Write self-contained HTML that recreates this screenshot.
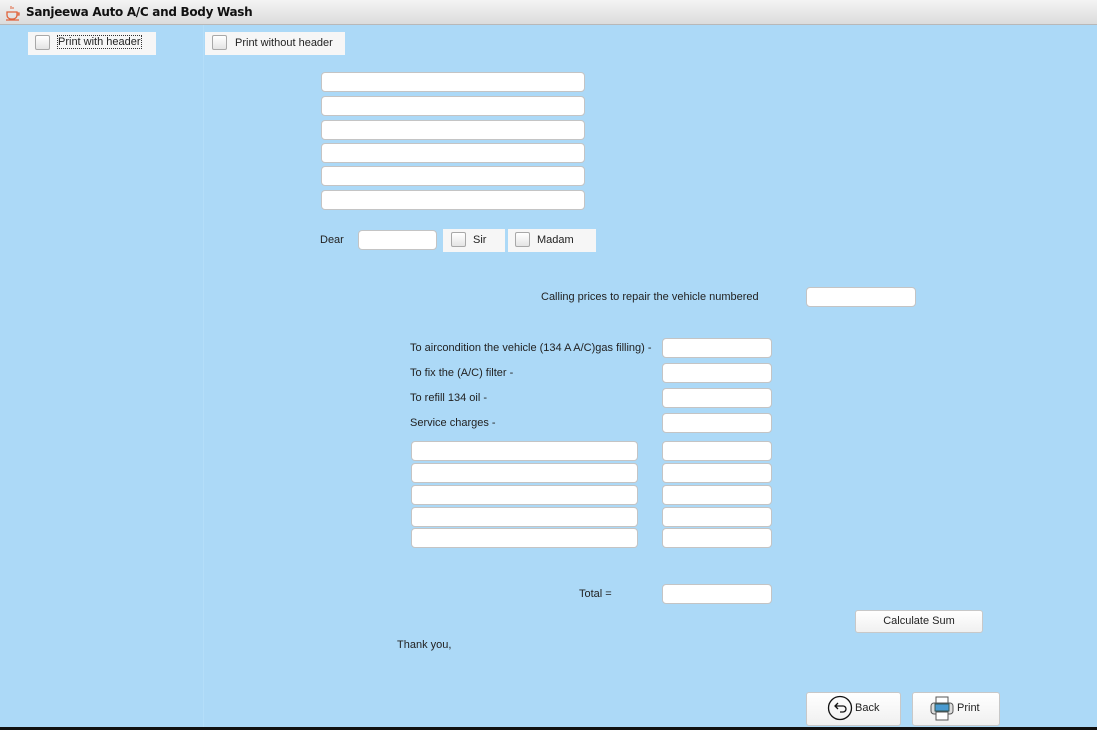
<!DOCTYPE html>
<html><head><style>
body{margin:0;width:1097px;height:730px;overflow:hidden;background:#acd9f7;font-family:"Liberation Sans",sans-serif;font-size:11px;color:#222;position:relative}
.a{position:absolute;white-space:nowrap}
.tb{left:0;top:0;width:1097px;height:25px;background:linear-gradient(#f4f4f4,#dcdcdc);border-bottom:1px solid #b8b8b8;box-sizing:border-box}
.tf{position:absolute;background:#fff;border:1px solid #c4c4c4;border-radius:4px;box-sizing:border-box;height:20px}
.cbp{position:absolute;background:#f6f6f6;box-sizing:border-box}
.cb{position:absolute;width:15px;height:15px;border:1px solid #a8a8a8;border-radius:2px;background:linear-gradient(#fff,#e4e4e4);box-sizing:border-box}
.btn{position:absolute;background:linear-gradient(#fff,#f0f0f0);border:1px solid #c8c8c8;border-radius:3px;box-sizing:border-box;text-align:center}
</style></head><body>
<div class="a tb"></div>
<svg class="a" style="left:4px;top:4px" width="18" height="18" viewBox="0 0 18 18"><path d="M3 8h10v3a4 4 0 0 1-4 4H7a4 4 0 0 1-4-4z M13 9h2v2h-2 M2 16h13" fill="none" stroke="#e0623a" stroke-width="1.3"/><path d="M7 2v3M9 3v2" stroke="#e0623a"/></svg>
<div class="a" style="left:26px;top:5px;font-weight:bold;font-size:12px;color:#111;font-family:'DejaVu Sans',sans-serif;letter-spacing:-0.3px">Sanjeewa Auto A/C and Body Wash</div>
<div class="a" style="left:203px;top:25px;width:1px;height:702px;background:#b4def9"></div>
<div class="cbp" style="left:28px;top:32px;width:128px;height:23px"></div>
<div class="cb" style="left:35px;top:35px"></div>
<div class="a" style="left:58px;top:36px;outline:1px dotted #333">Print with header</div>
<div class="cbp" style="left:205px;top:32px;width:140px;height:23px"></div>
<div class="cb" style="left:212px;top:35px"></div>
<div class="a" style="left:235px;top:37px">Print without header</div>

<div class="tf" style="left:321px;top:72px;width:264px"></div>
<div class="tf" style="left:321px;top:96px;width:264px"></div>
<div class="tf" style="left:321px;top:120px;width:264px"></div>
<div class="tf" style="left:321px;top:143px;width:264px"></div>
<div class="tf" style="left:321px;top:166px;width:264px"></div>
<div class="tf" style="left:321px;top:190px;width:264px"></div>

<div class="a" style="left:320px;top:234px">Dear</div>
<div class="tf" style="left:358px;top:230px;width:79px"></div>
<div class="cbp" style="left:443px;top:229px;width:62px;height:23px"></div>
<div class="cb" style="left:451px;top:232px"></div>
<div class="a" style="left:473px;top:234px">Sir</div>
<div class="cbp" style="left:508px;top:229px;width:88px;height:23px"></div>
<div class="cb" style="left:515px;top:232px"></div>
<div class="a" style="left:537px;top:234px">Madam</div>

<div class="a" style="left:541px;top:291px">Calling prices to repair the vehicle numbered</div>
<div class="tf" style="left:806px;top:287px;width:110px"></div>

<div class="a" style="left:410px;top:342px">To aircondition the vehicle (134 A A/C)gas filling) -</div>
<div class="a" style="left:410px;top:367px">To fix the (A/C) filter -</div>
<div class="a" style="left:410px;top:392px">To refill 134 oil -</div>
<div class="a" style="left:410px;top:417px">Service charges -</div>
<div class="tf" style="left:662px;top:338px;width:110px"></div>
<div class="tf" style="left:662px;top:363px;width:110px"></div>
<div class="tf" style="left:662px;top:388px;width:110px"></div>
<div class="tf" style="left:662px;top:413px;width:110px"></div>
<div class="tf" style="left:411px;top:441px;width:227px"></div>
<div class="tf" style="left:411px;top:463px;width:227px"></div>
<div class="tf" style="left:411px;top:485px;width:227px"></div>
<div class="tf" style="left:411px;top:507px;width:227px"></div>
<div class="tf" style="left:411px;top:528px;width:227px"></div>
<div class="tf" style="left:662px;top:441px;width:110px"></div>
<div class="tf" style="left:662px;top:463px;width:110px"></div>
<div class="tf" style="left:662px;top:485px;width:110px"></div>
<div class="tf" style="left:662px;top:507px;width:110px"></div>
<div class="tf" style="left:662px;top:528px;width:110px"></div>

<div class="a" style="left:579px;top:588px">Total =</div>
<div class="tf" style="left:662px;top:584px;width:110px"></div>
<div class="btn" style="left:855px;top:610px;width:128px;height:23px;line-height:21px">Calculate Sum</div>
<div class="a" style="left:397px;top:639px">Thank you,</div>

<div class="btn" style="left:806px;top:692px;width:95px;height:34px"></div>
<svg class="a" style="left:827px;top:695px" width="26" height="26" viewBox="0 0 26 26"><circle cx="13" cy="13" r="11.5" fill="none" stroke="#111" stroke-width="1.3"/><path d="M8 11h8a3 3 0 0 1 0 6h-3 M11 8l-3 3 3 3" fill="none" stroke="#111" stroke-width="1.3"/></svg>
<div class="a" style="left:855px;top:702px">Back</div>
<div class="btn" style="left:912px;top:692px;width:88px;height:34px"></div>
<svg class="a" style="left:929px;top:696px" width="26" height="26" viewBox="0 0 26 26"><rect x="7" y="1" width="12" height="7" fill="#fff" stroke="#555"/><rect x="2" y="7" width="22" height="11" rx="3" fill="#ddd" stroke="#555"/><rect x="6" y="8" width="14" height="7" fill="#4a9ad0" stroke="#355"/><rect x="7" y="16" width="12" height="8" fill="#fff" stroke="#555"/></svg>
<div class="a" style="left:957px;top:702px">Print</div>
<div class="a" style="left:0;top:727px;width:1097px;height:3px;background:#111"></div>
</body></html>
